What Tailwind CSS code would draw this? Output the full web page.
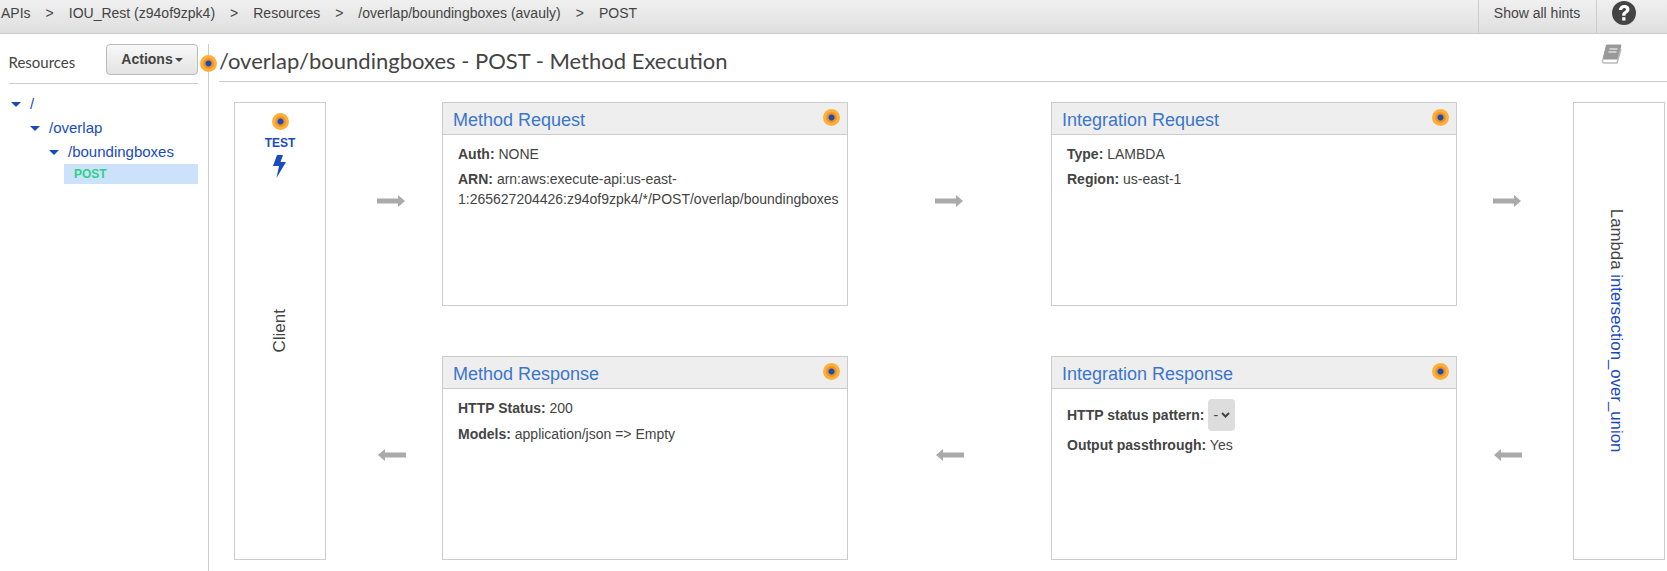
<!DOCTYPE html>
<html lang="en">
<head>
  <meta charset="UTF-8">
  <title>Method Execution</title>
  <script src="https://cdn.jsdelivr.net/npm/@tailwindcss/browser@4"></script>
</head>
<body class="bg-white h-[571px] overflow-hidden flex flex-col font-['Liberation_Sans',Arial,sans-serif] text-[14px] text-[#444]">

  <!-- breadcrumb bar -->
  <header class="h-[34px] shrink-0 flex bg-gradient-to-b from-[#f0f0f0] to-[#dfdfdf] border-b border-[#ccc]">
    <nav class="flex-1 flex items-start pt-[5px] pl-[1px] leading-[16px]">
      <span>APIs</span><span class="mx-[15px]">&gt;</span>
      <span>IOU_Rest (z94of9zpk4)</span><span class="mx-[15px]">&gt;</span>
      <span>Resources</span><span class="mx-[15px]">&gt;</span>
      <span>/overlap/boundingboxes (avauly)</span><span class="mx-[15px]">&gt;</span>
      <span>POST</span>
    </nav>
    <div class="w-[117px] mr-[1px] border-l border-[#ccc] pt-[5px] text-center leading-[16px]">Show all hints</div>
    <div class="w-[71px] border-l border-[#ccc] pl-[15px] pt-[1px]">
      <svg class="w-[24px] h-[24px]" viewBox="0 0 24 24"><circle cx="12" cy="12" r="12" fill="#444"/><path d="M6.800 9C7.100 5.800 9.300 3.900 12.300 3.900c3.100 0 5.200 1.800 5.200 4.400 0 1.900-1.100 3-2.500 3.900-1.200.8-1.500 1.300-1.500 2.500h-3.300c-.1-2.100.6-3.200 2-4.100 1.200-.8 1.800-1.300 1.800-2.100 0-1-.7-1.600-1.800-1.600-1.200 0-1.900.8-2 2z" fill="#fff"/><rect x="10.200" y="16.200" width="3.300" height="3.300" fill="#fff"/></svg>
    </div>
  </header>

  <div class="flex-1 flex min-h-0">
    <!-- resources sidebar -->
    <aside class="relative w-[209px] shrink-0 mt-[10px] border-r border-[#ccc] pl-[9px] pr-[10px]">
      <div class="h-[40px] flex items-start justify-between border-b border-[#ccc]">
        <span class="mt-[8px] -ml-[0.5px] font-['Lato',sans-serif] text-[15px] leading-[20px]">Resources</span>
        <button class="w-[92px] h-[31px] rounded-[4px] border border-[#bbb] bg-gradient-to-b from-[#f8f8f8] to-[#e3e3e3] font-bold flex items-center justify-center gap-[2px]">
          Actions<span class="mt-[1px] border-x-[4px] border-x-transparent border-t-[4px] border-t-[#444]"></span>
        </button>
      </div>
      <ul class="mt-[8px] text-[15px] text-[#1a4bbd] leading-[24px]">
        <li class="flex items-center"><span class="ml-[2px] mr-[9px] border-x-[5px] border-x-transparent border-t-[5px] border-t-[#1a4bbd]"></span>/</li>
        <li class="flex items-center pl-[19px]"><span class="ml-[2px] mr-[9px] border-x-[5px] border-x-transparent border-t-[5px] border-t-[#1a4bbd]"></span>/overlap</li>
        <li class="flex items-center pl-[38px]"><span class="ml-[2px] mr-[9px] border-x-[5px] border-x-transparent border-t-[5px] border-t-[#1a4bbd]"></span>/boundingboxes</li>
        <li class="ml-[55px] h-[20px] bg-[#cce2fb] pl-[10px] text-[12px] font-bold leading-[20px] text-[#2ed08a]">POST</li>
      </ul>
      <span class="absolute right-[-9px] top-[11px] w-[17px] h-[17px] rounded-full bg-[radial-gradient(circle,#1a4bbd_0_2.500px,#f0921c_3.500px_4.500px,#fdb03f_6px_8.500px)]"></span>
    </aside>

    <!-- method execution -->
    <main class="flex-1 min-w-0 pl-[10px]">
      <div class="h-[38px] mt-[10px] flex justify-between border-b border-[#ccc]">
        <h1 class="font-['Lato',sans-serif] text-[22px] leading-[32px] pt-[1px]">/overlap/boundingboxes - POST - Method Execution</h1>
        <svg class="w-[22px] h-[21px] mr-[44px]" viewBox="0 0 22 21"><path d="M5.500 1H20l-3.500 14H2z" fill="#999" stroke="#999" stroke-linejoin="round"/><path d="M2 15.500c-1 1.500-.5 3.500 1.200 3.500H16l4-14" fill="none" stroke="#bbb" stroke-width="1.500"/><path d="M8.500 5h8M7.500 8h8" stroke="#fff" stroke-width="1.200"/></svg>
      </div>

      <div class="mt-[20px] ml-[15px] grid grid-cols-[92px_116px_406px_203px_406px_116px_92px] grid-rows-[204px_50px_204px]">
        <section class="row-span-3 border border-[#ccc] relative flex flex-col items-center">
          <span class="mt-[10px] w-[17px] h-[17px] rounded-full bg-[radial-gradient(circle,#1a4bbd_0_2.500px,#f0921c_3.500px_4.500px,#fdb03f_6px_8.500px)]"></span>
          <span class="mt-[5px] text-[12px] font-bold text-[#1a4bbd] leading-[16px]">TEST</span>
          <svg class="mt-[4px] mr-[1px] w-[13px] h-[23px]" viewBox="0 0 13 23"><path d="M4 0h6L7.500 7H13L3.500 23 6 11H0z" fill="#1a4bbd"/></svg>
          <div class="absolute inset-0 flex items-center justify-center"><span class="-rotate-90 text-[17px] whitespace-nowrap">Client</span></div>
        </section>

        <div class="flex items-center justify-center pl-[14px] pb-[6px]">
          <svg class="w-[28px] h-[14px]" viewBox="0 0 28 14"><path d="M0 4.500h21V1l7 6-7 6V9.500H0z" fill="#aaa"/></svg>
        </div>

        <section class="border border-[#ccc]">
          <div class="relative h-[32px] bg-[#eee] border-b border-[#ccc] pl-[10px] text-[18px] leading-[34px] text-[#3b76cd]">Method Request
            <span class="absolute right-[7px] top-[6px] w-[17px] h-[17px] rounded-full bg-[radial-gradient(circle,#1a4bbd_0_2.500px,#f0921c_3.500px_4.500px,#fdb03f_6px_8.500px)]"></span>
          </div>
          <div class="pt-[9px] px-[15px] leading-[20px] space-y-[5px]">
            <p><b>Auth:</b> NONE</p>
            <p><b>ARN:</b> arn:aws:execute-api:us-east-1:265627204426:z94of9zpk4/*/POST/overlap/boundingboxes</p>
          </div>
        </section>

        <div class="flex items-center justify-center pr-[2px] pb-[6px]">
          <svg class="w-[28px] h-[14px]" viewBox="0 0 28 14"><path d="M0 4.500h21V1l7 6-7 6V9.500H0z" fill="#aaa"/></svg>
        </div>

        <section class="border border-[#ccc]">
          <div class="relative h-[32px] bg-[#eee] border-b border-[#ccc] pl-[10px] text-[18px] leading-[34px] text-[#3b76cd]">Integration Request
            <span class="absolute right-[7px] top-[6px] w-[17px] h-[17px] rounded-full bg-[radial-gradient(circle,#1a4bbd_0_2.500px,#f0921c_3.500px_4.500px,#fdb03f_6px_8.500px)]"></span>
          </div>
          <div class="pt-[9px] px-[15px] leading-[20px] space-y-[5px]">
            <p><b>Type:</b> LAMBDA</p>
            <p><b>Region:</b> us-east-1</p>
          </div>
        </section>

        <div class="flex items-center justify-center pr-[17px] pb-[6px]">
          <svg class="w-[28px] h-[14px]" viewBox="0 0 28 14"><path d="M0 4.500h21V1l7 6-7 6V9.500H0z" fill="#aaa"/></svg>
        </div>

        <section class="row-span-3 border border-[#ccc] flex items-center justify-center pr-[4px]">
          <span class="rotate-90 text-[16.800px] whitespace-nowrap">Lambda <span class="text-[#1a4bbd]">intersection_over_union</span></span>
        </section>

        <div class="col-start-2 row-start-3 flex items-center justify-center pl-[16px] pb-[6px]">
          <svg class="w-[28px] h-[14px]" viewBox="0 0 28 14"><path d="M28 4.500H7V1L0 7l7 6V9.500h21z" fill="#aaa"/></svg>
        </div>

        <section class="col-start-3 row-start-3 border border-[#ccc]">
          <div class="relative h-[32px] bg-[#eee] border-b border-[#ccc] pl-[10px] text-[18px] leading-[34px] text-[#3b76cd]">Method Response
            <span class="absolute right-[7px] top-[6px] w-[17px] h-[17px] rounded-full bg-[radial-gradient(circle,#1a4bbd_0_2.500px,#f0921c_3.500px_4.500px,#fdb03f_6px_8.500px)]"></span>
          </div>
          <div class="pt-[9px] px-[15px] leading-[20px] space-y-[6px]">
            <p><b>HTTP Status:</b> 200</p>
            <p><b>Models:</b> application/json =&gt; Empty</p>
          </div>
        </section>

        <div class="col-start-4 row-start-3 flex items-center justify-center pb-[6px]">
          <svg class="w-[28px] h-[14px]" viewBox="0 0 28 14"><path d="M28 4.500H7V1L0 7l7 6V9.500h21z" fill="#aaa"/></svg>
        </div>

        <section class="col-start-5 row-start-3 border border-[#ccc]">
          <div class="relative h-[32px] bg-[#eee] border-b border-[#ccc] pl-[10px] text-[18px] leading-[34px] text-[#3b76cd]">Integration Response
            <span class="absolute right-[7px] top-[6px] w-[17px] h-[17px] rounded-full bg-[radial-gradient(circle,#1a4bbd_0_2.500px,#f0921c_3.500px_4.500px,#fdb03f_6px_8.500px)]"></span>
          </div>
          <div class="pt-[10px] px-[15px] leading-[20px]">
            <p class="flex items-center h-[32px]"><b>HTTP status pattern:</b><span class="ml-[4px] w-[27px] h-[32px] rounded-[4px] bg-[#ddd] flex items-center justify-center gap-[3px]">-<svg class="w-[9px] h-[6px]" viewBox="0 0 9 6"><path d="M1 1l3.500 3.500L8 1" fill="none" stroke="#444" stroke-width="2"/></svg></span></p>
            <p class="mt-[4px]"><b>Output passthrough:</b> Yes</p>
          </div>
        </section>

        <div class="col-start-6 row-start-3 flex items-center justify-center pr-[15px] pb-[6px]">
          <svg class="w-[28px] h-[14px]" viewBox="0 0 28 14"><path d="M28 4.500H7V1L0 7l7 6V9.500h21z" fill="#aaa"/></svg>
        </div>
      </div>
    </main>
  </div>
</body>
</html>
